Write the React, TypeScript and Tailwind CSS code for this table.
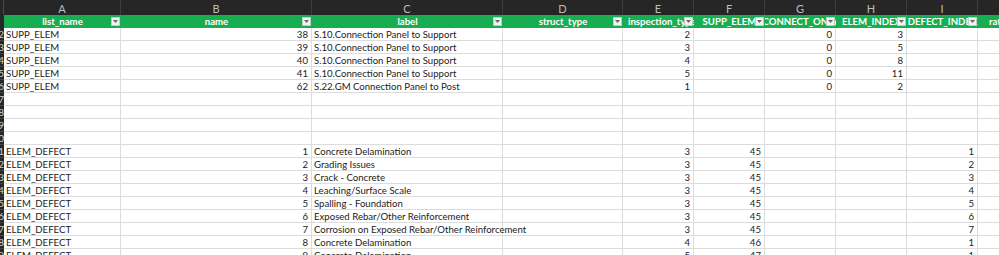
import React from "react";

type Col = { letter: string; header: string; w: string; num?: boolean; headerLeft?: boolean };

const cols: Col[] = [
  { letter: "A", header: "list_name", w: "w-[117px]" },
  { letter: "B", header: "name", w: "w-[191px]", num: true },
  { letter: "C", header: "label", w: "w-[191px]" },
  { letter: "D", header: "struct_type", w: "w-[120px]" },
  { letter: "E", header: "inspection_type", w: "w-[71px]", num: true, headerLeft: true },
  { letter: "F", header: "SUPP_ELEM", w: "w-[71px]", num: true },
  { letter: "G", header: "CONNECT_ONLY", w: "w-[71px]", num: true },
  { letter: "H", header: "ELEM_INDEX", w: "w-[71px]", num: true },
  { letter: "I", header: "DEFECT_INDEX", w: "w-[71px]", num: true },
  { letter: "J", header: "rating_code", w: "w-[72px]" },
];

const rows: string[][] = [
  ["SUPP_ELEM", "38", "S.10.Connection Panel to Support", "", "2", "", "0", "3", ""],
  ["SUPP_ELEM", "39", "S.10.Connection Panel to Support", "", "3", "", "0", "5", ""],
  ["SUPP_ELEM", "40", "S.10.Connection Panel to Support", "", "4", "", "0", "8", ""],
  ["SUPP_ELEM", "41", "S.10.Connection Panel to Support", "", "5", "", "0", "11", ""],
  ["SUPP_ELEM", "62", "S.22.GM Connection Panel to Post", "", "1", "", "0", "2", ""],
  [],
  [],
  [],
  [],
  ["ELEM_DEFECT", "1", "Concrete Delamination", "", "3", "45", "", "", "1"],
  ["ELEM_DEFECT", "2", "Grading Issues", "", "3", "45", "", "", "2"],
  ["ELEM_DEFECT", "3", "Crack - Concrete", "", "3", "45", "", "", "3"],
  ["ELEM_DEFECT", "4", "Leaching/Surface Scale", "", "3", "45", "", "", "4"],
  ["ELEM_DEFECT", "5", "Spalling - Foundation", "", "3", "45", "", "", "5"],
  ["ELEM_DEFECT", "6", "Exposed Rebar/Other Reinforcement", "", "3", "45", "", "", "6"],
  ["ELEM_DEFECT", "7", "Corrosion on Exposed Rebar/Other Reinforcement", "", "3", "45", "", "", "7"],
  ["ELEM_DEFECT", "8", "Concrete Delamination", "", "4", "46", "", "", "1"],
  ["ELEM_DEFECT", "9", "Concrete Delamination", "", "5", "47", "", "", "1"],
  ["ELEM_DEFECT", "10", "Concrete Delamination", "", "5", "47", "", "", "2"],
];

function FilterButton() {
  return (
    <span className="absolute right-[1px] top-[2px] flex h-[9px] w-[9px] items-center justify-center border border-[#c8c8c8] bg-[#f3f3f3]">
      <svg width="5" height="3" viewBox="0 0 5 3">
        <path d="M0 0 L5 0 L2.5 3 Z" fill="#666" />
      </svg>
    </span>
  );
}

export default function App() {
  return (
    <div
      className="h-[255px] w-[999px] overflow-hidden bg-white text-[9.6px] text-[#222]"
      style={{ fontFamily: "Lato, 'Open Sans', sans-serif" }}
    >
      {/* column letters */}
      <div className="flex h-[15px] bg-[#262626] text-[11px] text-[#bdbdbd]">
        <div className="w-[4px] shrink-0 border-r border-[#4a4a4a]" />
        {cols.map((c) => (
          <div
            key={c.letter}
            className={`${c.w} flex shrink-0 items-center justify-center border-r border-[#3e3e3e] pt-[1px] leading-none`}
          >
            {c.letter}
          </div>
        ))}
      </div>

      {/* table header */}
      <div className="flex h-[13px] bg-[#16ae51] font-bold text-white">
        <div className="w-[4px] shrink-0 bg-[#262626]" />
        {cols.map((c) => (
          <div key={c.letter} className={`${c.w} relative flex shrink-0 items-center overflow-hidden whitespace-nowrap pt-[1px] leading-none ${c.headerLeft ? "justify-start pl-[5px]" : "justify-center"}`}>
            <span>{c.header}</span>
            {c.letter !== "J" && <FilterButton />}
          </div>
        ))}
      </div>

      {/* data rows */}
      {rows.map((r, i) => (
        <div key={i} className="flex h-[13px]">
          <div className="flex w-[4px] shrink-0 items-center justify-end overflow-hidden border-b border-[#444] bg-[#262626] text-[10px] leading-none text-[#cfcfcf]">
            <span className="shrink-0">{i + 2}</span>
          </div>
          {cols.map((c, j) => (
            <div
              key={c.letter}
              className={`${c.w} flex shrink-0 items-center whitespace-nowrap border-b border-r border-[#dcdcdc] pt-[1px] leading-none ${
                c.num ? "justify-end pr-[3px]" : "justify-start pl-[2px]"
              } ${j === 2 ? "overflow-visible" : "overflow-hidden"}`}
            >
              {r[j] ?? ""}
            </div>
          ))}
        </div>
      ))}
    </div>
  );
}
